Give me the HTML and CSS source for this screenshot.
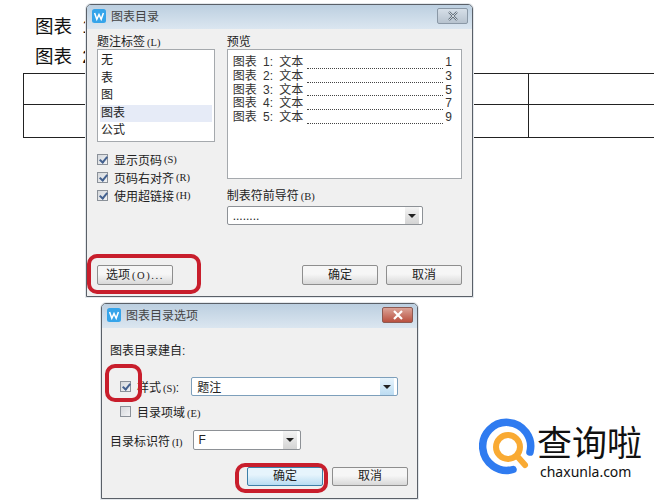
FILE: index.html
```html
<!DOCTYPE html>
<html lang="zh-CN">
<head>
    <meta charset="UTF-8">
    <meta name="viewport" content="width=device-width, initial-scale=1.0">
    <title>图表目录</title>
    <link rel="stylesheet" href="styles.css">
</head>
<body>
    <!-- Document behind the dialogs -->
    <div class="doc">
        <p class="doc-line">图表 1</p>
        <p class="doc-line">图表 2</p>
        <div class="doc-table">
            <div class="doc-cell"></div>
            <div class="doc-cell"></div>
            <div class="doc-cell"></div>
            <div class="doc-cell"></div>
        </div>
    </div>

    <!-- 图表目录 -->
    <div class="dialog dialog-main">
        <div class="titlebar">
            <svg class="app-icon" viewBox="0 0 14 14"><rect width="14" height="14" rx="2.5" fill="#35a4ea"/><path d="M2.6 4l2.2 6.2L7 5.6l2.2 4.6L11.4 4" fill="none" stroke="#fff" stroke-width="1.5"/></svg>
            <span class="title">图表目录</span>
            <div class="close-btn">
                <svg viewBox="0 0 12 10"><path d="M2 1l8 8M10 1L2 9" stroke="#5f6b78" stroke-width="2.2" fill="none"/><path d="M2 1l8 8M10 1L2 9" stroke="#eef2f6" stroke-width=".8" fill="none"/></svg>
            </div>
        </div>
        <div class="main-body">
            <div class="main-cols">
                <div class="col-left">
                    <div class="label">题注标签<small>(L)</small></div>
                    <ul class="caption-list">
                        <li>无</li>
                        <li>表</li>
                        <li>图</li>
                        <li class="selected">图表</li>
                        <li>公式</li>
                    </ul>
                    <div class="check-group">
                        <div class="check-row"><span class="checkbox checked"></span>显示页码<small>(S)</small></div>
                        <div class="check-row"><span class="checkbox checked"></span>页码右对齐<small>(R)</small></div>
                        <div class="check-row"><span class="checkbox checked"></span>使用超链接<small>(H)</small></div>
                    </div>
                </div>
                <div class="col-right">
                    <div class="label">预览</div>
                    <div class="preview">
                        <div class="preview-row"><span>图表 1: 文本</span><i class="leader"></i><span>1</span></div>
                        <div class="preview-row"><span>图表 2: 文本</span><i class="leader"></i><span>3</span></div>
                        <div class="preview-row"><span>图表 3: 文本</span><i class="leader"></i><span>5</span></div>
                        <div class="preview-row"><span>图表 4: 文本</span><i class="leader"></i><span>7</span></div>
                        <div class="preview-row"><span>图表 5: 文本</span><i class="leader"></i><span>9</span></div>
                    </div>
                    <div class="label leader-label">制表符前导符<small>(B)</small></div>
                    <div class="combo leader-combo"><span>........</span><span class="combo-arrow"></span></div>
                </div>
            </div>
            <div class="main-buttons">
                <div class="btn">选项<small class="wide">(O)...</small></div>
                <div class="btn-group">
                    <div class="btn">确定</div>
                    <div class="btn">取消</div>
                </div>
            </div>
        </div>
    </div>

    <!-- 图表目录选项 -->
    <div class="dialog dialog-options">
        <div class="titlebar">
            <svg class="app-icon" viewBox="0 0 14 14"><rect width="14" height="14" rx="2.5" fill="#35a4ea"/><path d="M2.6 4l2.2 6.2L7 5.6l2.2 4.6L11.4 4" fill="none" stroke="#fff" stroke-width="1.5"/></svg>
            <span class="title">图表目录选项</span>
            <div class="close-btn close-red">
                <svg viewBox="0 0 12 10"><path d="M2 1l8 8M10 1L2 9" stroke="#fff" stroke-width="2.2" fill="none"/></svg>
            </div>
        </div>
        <div class="options-body">
            <div class="label">图表目录建自:</div>
            <div class="option-row style-row">
                <span class="checkbox checked"></span>
                <span class="option-text">样式<small>(S)</small>:</span>
                <div class="combo style-combo"><span>题注</span><span class="combo-arrow arrow-blue"></span></div>
            </div>
            <div class="option-row area-row">
                <span class="checkbox"></span>
                <span class="option-text">目录项域<small>(E)</small></span>
            </div>
            <div class="option-row id-row">
                <span>目录标识符<small>(I)</small></span>
                <div class="combo id-combo"><span>F</span><span class="combo-arrow"></span></div>
            </div>
            <div class="options-buttons">
                <div class="btn btn-default">确定</div>
                <div class="btn">取消</div>
            </div>
        </div>
    </div>

    <!-- Red marks drawn on the screenshot -->
    <div class="mark mark-options"></div>
    <div class="mark mark-check"></div>
    <div class="mark mark-ok"></div>

    <!-- Watermark -->
    <div class="logo">
        <svg class="logo-icon" viewBox="0 0 58 58">
            <path d="M51 34A24 24 0 1 0 34 51.5" fill="none" stroke="#2f7bf0" stroke-width="7.5" stroke-linecap="round"/>
            <circle cx="29" cy="29" r="12" fill="none" stroke="#f9aa33" stroke-width="6"/>
            <path d="M38 38l8 9" stroke="#f9aa33" stroke-width="6" stroke-linecap="round"/>
        </svg>
        <div class="logo-text">
            <div class="logo-name">查询啦</div>
            <div class="logo-url">chaxunla.com</div>
        </div>
    </div>
</body>
</html>
```

FILE: styles.css
```css
html, body {
    margin: 0;
    height: 100%;
    overflow: hidden;
}

body {
    position: relative;
    background: #fff;
    color: #222;
    font-family: "Liberation Sans", "Noto Sans CJK SC", sans-serif;
    font-size: 12px;
}

small {
    font-family: "Liberation Serif", "Noto Sans CJK SC", serif;
    font-size: 10.5px;
    margin-left: 2px;
}

small.wide {
    letter-spacing: 1.6px;
}

/* Document */
.doc {
    padding: 12px 0 0 23px;
}

.doc-line {
    margin: 0 0 0 12px;
    height: 30px;
    line-height: 30px;
    font-size: 18.5px;
    word-spacing: 5px;
    color: #111;
}

.doc-table {
    display: grid;
    grid-template-columns: 505px 1fr;
    grid-template-rows: 31px 33px;
    width: 631px;
    box-sizing: border-box;
    margin-top: 1px;
    border-top: 1px solid #222;
    border-left: 1px solid #222;
}

.doc-cell {
    border-right: 1px solid #222;
    border-bottom: 1px solid #222;
}

.doc-cell:nth-child(2n) {
    border-right: 0;
}

/* Dialog frame */
.dialog {
    position: absolute;
    display: flex;
    flex-direction: column;
    box-sizing: border-box;
    background: #f0f0f0;
    border: 1px solid #5a6068;
    border-radius: 5px 5px 0 0;
    box-shadow: 0 0 0 1px #e4e8ec;
}

.dialog-main {
    left: 86px;
    top: 4px;
    width: 387px;
    height: 293px;
}

.dialog-options {
    left: 101px;
    top: 303px;
    width: 317px;
    height: 196px;
}

.titlebar {
    display: flex;
    align-items: center;
    flex: none;
    box-sizing: border-box;
    height: 24px;
    padding: 0 4px 3px 5px;
    background: linear-gradient(#bccfe0, #dbe6f0);
    border-radius: 4px 4px 0 0;
}

.app-icon {
    width: 14px;
    height: 14px;
    margin-right: 5px;
}

.title {
    flex: 1;
    color: #444;
}

.close-btn {
    display: flex;
    align-items: center;
    justify-content: center;
    box-sizing: border-box;
    width: 31px;
    height: 16px;
    background: linear-gradient(#d6dfe8, #b7c3cf);
    border: 1px solid #8a98a6;
    border-radius: 2px;
}

.close-btn svg {
    width: 12px;
    height: 10px;
}

.close-red {
    background: linear-gradient(#dba397, #b9503f);
    border-color: #8d5a52;
}

/* Main dialog */
.main-body {
    display: flex;
    flex-direction: column;
    flex: 1;
    padding: 5px 10px 11px 10px;
}

.main-cols {
    display: flex;
    flex: 1;
    gap: 12px;
}

.col-left {
    width: 118px;
}

.col-right {
    width: 236px;
}

.label {
    height: 15px;
    line-height: 17px;
    white-space: nowrap;
}

.caption-list {
    box-sizing: border-box;
    height: 93px;
    margin: 0;
    padding: 2px;
    list-style: none;
    background: #fff;
    border: 1px solid #a5a9ad;
}

.caption-list li {
    height: 17.6px;
    line-height: 17.6px;
    padding-left: 1px;
}

.caption-list .selected {
    background: #e6ebf7;
}

.check-group {
    margin-top: 8px;
}

.check-row {
    display: flex;
    align-items: center;
    height: 18px;
    white-space: nowrap;
}

.checkbox {
    position: relative;
    flex: none;
    box-sizing: border-box;
    width: 11px;
    height: 11px;
    margin-right: 6px;
    background: linear-gradient(135deg, #d5d8dc, #f2f3f5);
    border: 1px solid #8b9199;
}

.checked::after {
    content: "";
    position: absolute;
    left: 3px;
    top: 0;
    width: 3px;
    height: 6px;
    border: solid #44618f;
    border-width: 0 2px 2px 0;
    transform: rotate(40deg);
}

.preview {
    box-sizing: border-box;
    height: 130px;
    padding: 6px 9px 0 5px;
    background: #fff;
    border: 1px solid #a5a9ad;
}

.preview-row {
    display: flex;
    align-items: flex-end;
    height: 13.8px;
    line-height: 13.8px;
    white-space: pre;
    word-spacing: 3px;
    color: #333;
}

.leader {
    flex: 1;
    height: 3px;
    margin: 0 2px 1px 4px;
    border-bottom: 1px dotted #444;
}

.leader-label {
    margin-top: 9px;
}

.combo {
    display: flex;
    align-items: center;
    justify-content: space-between;
    box-sizing: border-box;
    padding: 0 3px 0 5px;
    background: #fff;
    border: 1px solid #8d9196;
    border-radius: 2px;
}

.combo-arrow {
    position: relative;
    flex: none;
    width: 14px;
    height: 100%;
    background: linear-gradient(#f4f4f4, #d4d4d4);
}

.combo-arrow::after {
    content: "";
    position: absolute;
    left: 3px;
    top: 7px;
    border: 4px solid transparent;
    border-top: 4px solid #222;
    border-bottom-width: 0;
}

.arrow-blue {
    background: linear-gradient(#e8f4fc, #bcdcf2);
}

.leader-combo {
    width: 196px;
    height: 19px;
    margin-top: 3px;
}

.main-buttons {
    display: flex;
    justify-content: space-between;
}

.btn-group {
    display: flex;
    gap: 8px;
}

.btn {
    box-sizing: border-box;
    width: 76px;
    height: 20px;
    line-height: 18px;
    text-align: center;
    white-space: nowrap;
    background: linear-gradient(#f6f6f6 45%, #d8d8d8);
    border: 1px solid #8e8e8e;
    border-radius: 2px;
}

.btn-default {
    background: linear-gradient(#e6f4fc 40%, #b8dcf2);
    border-color: #3d7fa8;
}

/* Options dialog */
.options-body {
    display: flex;
    flex-direction: column;
    flex: 1;
    padding: 15px 9px 0 8px;
}

.option-row {
    display: flex;
    align-items: center;
    white-space: nowrap;
}

.style-row {
    margin-top: 19px;
    padding-left: 10px;
}

.area-row {
    margin-top: 9px;
    padding-left: 10px;
    height: 12px;
}

.id-row {
    margin-top: 13px;
    gap: 10px;
}

.style-combo {
    width: 207px;
    height: 19px;
    margin-left: 12px;
    border-color: #7d9fbb;
}

.id-combo {
    width: 108px;
    height: 20px;
}

.options-buttons {
    display: flex;
    justify-content: flex-end;
    gap: 9px;
    margin-top: 17px;
}

.options-buttons .btn {
    width: 76px;
    height: 19px;
    line-height: 17px;
}

/* Hand drawn red marks */
.mark {
    position: absolute;
    box-sizing: border-box;
    border: 4px solid #c81e2c;
    border-radius: 10px;
}

.mark-options {
    left: 87px;
    top: 254px;
    width: 114px;
    height: 40px;
}

.mark-check {
    left: 105px;
    top: 364px;
    width: 37px;
    height: 38px;
}

.mark-ok {
    left: 235px;
    top: 463px;
    width: 93px;
    height: 30px;
}

/* Watermark */
.logo {
    position: absolute;
    left: 479px;
    top: 418px;
    display: flex;
    color: #111;
}

.logo-icon {
    width: 58px;
    height: 58px;
}

.logo-name {
    height: 46px;
    line-height: 46px;
    font-family: "Noto Sans CJK SC", sans-serif;
    font-size: 35px;
    white-space: nowrap;
}

.logo-url {
    padding-left: 3px;
    font-family: "Noto Sans", sans-serif;
    font-size: 14px;
    line-height: 16px;
}
```
